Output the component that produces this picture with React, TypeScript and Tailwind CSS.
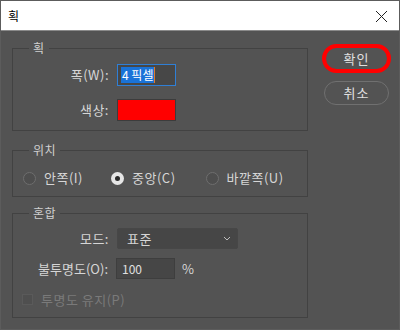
const font = "font-['Noto_Sans_CJK_KR','Noto_Sans',sans-serif]"

function Group({ label, className, children }: { label: string; className: string; children: React.ReactNode }) {
  return (
    <div className={`relative w-[296px] border border-[#424242] ${className}`}>
      <span className="absolute -top-[10px] left-[16px] bg-[#535353] px-[4px] text-[12px] leading-[18px] tracking-[0.5px] text-[#d0d0d0]">
        {label}
      </span>
      {children}
    </div>
  )
}

function Radio({ checked, label }: { checked?: boolean; label: string }) {
  return (
    <div className="flex items-center gap-[8px]">
      {checked ? (
        <span className="flex h-[13px] w-[13px] items-center justify-center rounded-full bg-[#e6e6e6]">
          <span className="h-[5px] w-[5px] rounded-full bg-[#2a2a2a]" />
        </span>
      ) : (
        <span className="h-[13px] w-[13px] rounded-full border border-[#6e6e6e] bg-[#4e4e4e]" />
      )}
      <span className="text-[13px] tracking-[0.5px] text-[#d6d6d6]">{label}</span>
    </div>
  )
}

export default function App() {
  return (
    <div className={`flex h-[330px] w-[400px] flex-col overflow-hidden border border-[#5c5c5c] bg-[#535353] ${font}`}>
      <div className="flex h-[29px] shrink-0 items-center justify-between bg-white pl-[7px] pr-[11px]">
        <span className="text-[12px] text-black">획</span>
        <svg width="13" height="13" viewBox="0 0 13 13" className="mt-[1px]">
          <path d="M1 1 L12 12 M12 1 L1 12" stroke="#222" strokeWidth="1" />
        </svg>
      </div>
      <div className="h-[1px] bg-[#8a8a8a]" />

      <div className="flex pl-[11px] pt-[17px]">
        <div className="flex flex-col">
          <Group label="획" className="h-[83px] pt-[15px]">
            <div className="flex items-center">
              <span className="w-[97px] pr-[1px] text-right text-[13px] tracking-[0.5px] text-[#d6d6d6]">폭(W):</span>
              <div className="ml-[7px] flex h-[22px] w-[59px] items-center border border-[#2f7fd6] bg-[#474747] pl-[3px]">
                <span className="bg-[#1a73d8] px-[1px] text-[12px] leading-[16px] text-white">4 픽셀</span>
                <span className="h-[16px] w-[1px] bg-[#e07a2c]" />
              </div>
            </div>
            <div className="mt-[13px] flex items-center">
              <span className="w-[97px] pr-[1px] text-right text-[13px] tracking-[0.5px] text-[#d6d6d6]">색상:</span>
              <div className="ml-[7px] h-[22px] w-[59px] border border-[#3c3c3c] bg-[#ff0000]" />
            </div>
          </Group>

          <Group label="위치" className="mt-[19px] h-[47px] pt-[19px]">
            <div className="flex h-[16px] items-center pl-[10px]">
              <Radio label="안쪽(I)" />
              <div className="ml-[28px]">
                <Radio checked label="중앙(C)" />
              </div>
              <div className="ml-[30px]">
                <Radio label="바깥쪽(U)" />
              </div>
            </div>
          </Group>

          <Group label="혼합" className="mt-[16px] h-[105px] pt-[14px]">
            <div className="flex items-center">
              <span className="w-[97px] pr-[1px] text-right text-[13px] tracking-[0.5px] text-[#d6d6d6]">모드:</span>
              <div className="ml-[7px] flex h-[21px] w-[121px] items-center justify-between rounded-[2px] border border-[#474747] bg-[#464646] pl-[9px] pr-[6px]">
                <span className="text-[13px] tracking-[0.5px] text-[#d6d6d6]">표준</span>
                <svg width="8" height="5" viewBox="0 0 8 5">
                  <path d="M1 1 L4 4 L7 1" fill="none" stroke="#bdbdbd" strokeWidth="1" />
                </svg>
              </div>
            </div>
            <div className="mt-[9px] flex items-center">
              <span className="w-[96px] pr-[1px] text-right text-[13px] text-[#d6d6d6]">불투명도(O):</span>
              <div className="ml-[7px] flex h-[21px] w-[59px] items-center border border-[#3e3e3e] bg-[#464646] pl-[5px]">
                <span className="text-[12px] text-[#e0e0e0]">100</span>
              </div>
              <span className="ml-[7px] text-[13px] text-[#d6d6d6]">%</span>
            </div>
            <div className="mt-[11px] flex items-center pl-[9px]">
              <span className="h-[11px] w-[11px] border border-[#5a5a5a] bg-[#4f4f4f]" />
              <span className="ml-[8px] text-[13px] tracking-[0.5px] text-[#7a7a7a]">투명도 유지(P)</span>
            </div>
          </Group>
        </div>

        <div className="ml-[14px] flex flex-col items-center">
          <div className="-mt-[4px] flex h-[29px] w-[69px] items-center justify-center rounded-full border-[4px] border-[#ff0000]">
            <span className="text-[13px] tracking-[1px] text-[#e0e0e0]">확인</span>
          </div>
          <div className="mt-[8px] flex h-[24px] w-[65px] items-center justify-center rounded-full border border-[#707070]">
            <span className="text-[13px] tracking-[1px] text-[#e0e0e0]">취소</span>
          </div>
        </div>
      </div>
    </div>
  )
}
